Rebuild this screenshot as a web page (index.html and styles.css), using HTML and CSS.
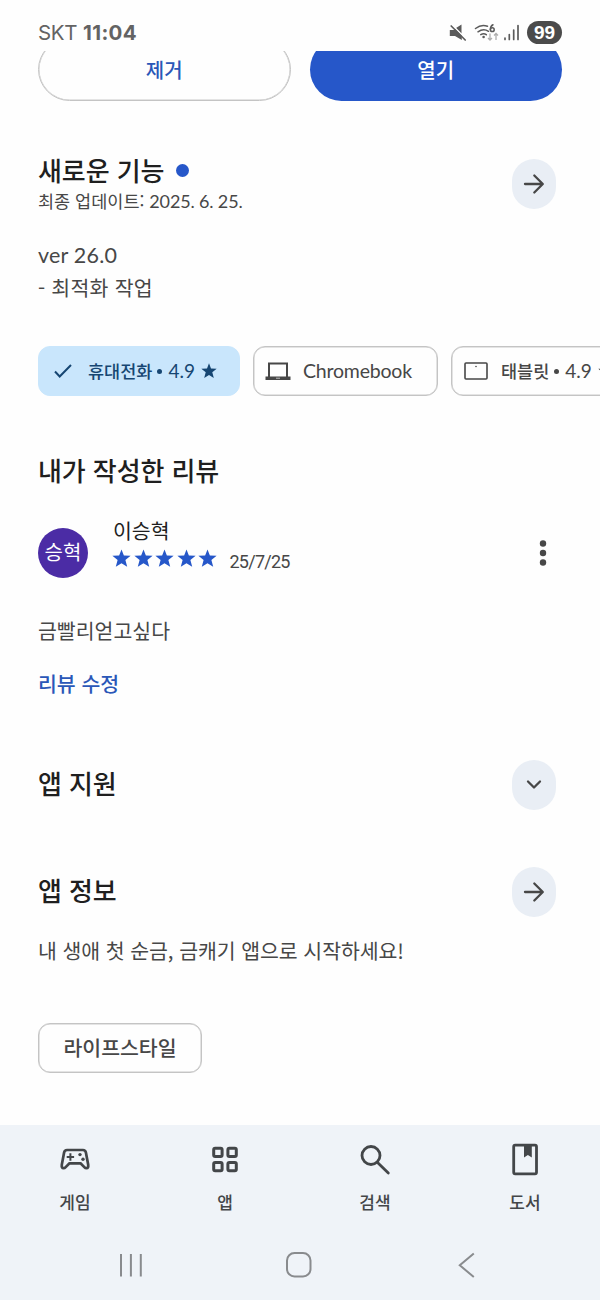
FILE: index.html
```html
<!DOCTYPE html>
<html lang="ko">
<head>
<meta charset="utf-8">
<title>앱 상세</title>
<link rel="stylesheet" href="styles.css">
</head>
<body>
<svg class="defs" width="0" height="0" aria-hidden="true">
  <symbol id="star" viewBox="0 0 20 20"><path d="M10 .4l2.500 6.400 7.100.4-5.500 4.500 1.900 7.100L10 14.900l-6 3.900 1.900-7.100L.4 7.200l7.100-.4z"/></symbol>
  <symbol id="arrow" viewBox="0 0 24 24"><path d="M3 12h17.500M12.300 3.500l8.500 8.500-8.500 8.500" fill="none" stroke="currentColor" stroke-width="2.300" stroke-linecap="round" stroke-linejoin="round"/></symbol>
</svg>
<div class="screen">
  <header class="status">
    <span class="carrier">SKT</span><span class="clock">11:04</span>
    <div class="status-icons">
      <svg class="mute" width="18" height="18" viewBox="0 0 18 18"><path d="M.8 6h4l1.500-1.100 6.500 6.500V16L6 12H.8zM7 4l5.500-3.500v9z" fill="#5b5b5b"/><path d="M3.500 1.200l13.500 14" stroke="#fefefe" stroke-width="1.200"/><path d="M2.200 2l14 14" stroke="#5b5b5b" stroke-width="1.700" stroke-linecap="round"/></svg>
      <svg class="wifi" width="26" height="20" viewBox="0 0 26 20"><g fill="none" stroke="#5b5b5b" stroke-width="1.500" stroke-linecap="round"><path d="M1.500 5.500Q7.500.8 13.500 3.300M4 8.800Q9.500 4.800 14.500 8.300M6.800 11.700Q9.700 9.800 12.300 11.700"/><path d="M19 1.800Q16.500 3 16.300 6.500"/><circle cx="18.300" cy="6.700" r="1.900"/></g><circle cx="9.600" cy="14" r="1.300" fill="#5b5b5b"/><path d="M16 10.500v6.500m-2-2l2 2 2-2M22 17v-6.500m-2 2l2-2 2 2" fill="none" stroke="#adadad" stroke-width="1.300"/></svg>
      <svg class="signal" width="17" height="18" viewBox="0 0 17 18"><path d="M2 14v1.500M6.300 10.500v5M10.700 6v9.500M15 1.500v14" stroke="#5b5b5b" stroke-width="1.700" stroke-linecap="round"/></svg>
      <span class="battery">99</span>
    </div>
  </header>

  <main>
    <div class="actions">
      <button class="btn outline">제거</button>
      <button class="btn filled">열기</button>
    </div>

    <section class="news">
      <div class="head">
        <div>
          <h2 class="with-dot">새로운 기능<i class="dot"></i></h2>
          <p class="updated">최종 업데이트: <span class="latin">2025. 6. 25.</span></p>
        </div>
        <button class="round"><svg width="24" height="24"><use href="#arrow"/></svg></button>
      </div>
      <p class="body notes"><span class="latin ver">ver 26.0</span><br><span class="change">- 최적화 작업</span></p>
    </section>

    <div class="chips">
      <div class="chip selected">
        <svg class="check" width="20" height="18" viewBox="0 0 20 18"><path d="M2 9.500l4.700 5L18 3" fill="none" stroke="currentColor" stroke-width="2"/></svg>
        <span class="label">휴대전화</span><i class="bullet"></i><span class="latin score">4.9</span><svg class="star" width="16" height="16"><use href="#star"/></svg>
      </div>
      <div class="chip chrome">
        <svg width="26" height="20" viewBox="0 0 26 20"><path d="M4 16V2.500h18V16" fill="none" stroke="#474747" stroke-width="2"/><path d="M.5 15.500h25V19H.5z" fill="#474747"/><path d="M11 17.200h4" stroke="#bbb"/></svg>
        <span class="latin chromebook">Chromebook</span>
      </div>
      <div class="chip tablet">
        <svg width="24" height="18" viewBox="0 0 24 18"><rect x="1" y="1" width="22" height="16" rx="1" fill="none" stroke="#474747" stroke-width="1.600"/><circle cx="12" cy="4.500" r=".8" fill="#474747"/></svg>
        <span class="label">태블릿</span><i class="bullet"></i><span class="latin score">4.9</span><svg class="star" width="16" height="16"><use href="#star"/></svg>
      </div>
    </div>

    <section class="review">
      <h2>내가 작성한 리뷰</h2>
      <div class="reviewer">
        <div class="avatar">승혁</div>
        <div class="who">
          <div class="name">이승혁</div>
          <div class="rating">
            <svg width="19" height="19"><use href="#star"/></svg><svg width="19" height="19"><use href="#star"/></svg><svg width="19" height="19"><use href="#star"/></svg><svg width="19" height="19"><use href="#star"/></svg><svg width="19" height="19"><use href="#star"/></svg>
            <span class="date">25/7/25</span>
          </div>
        </div>
        <svg class="more" width="8" height="28" viewBox="0 0 8 28" fill="#474747"><circle cx="4" cy="4.500" r="3.200"/><circle cx="4" cy="14" r="3.200"/><circle cx="4" cy="23.500" r="3.200"/></svg>
      </div>
      <p class="body comment">금빨리얻고싶다</p>
      <a class="edit">리뷰 수정</a>
    </section>

    <section class="head support">
      <h2>앱 지원</h2>
      <button class="round"><svg width="18" height="12" viewBox="0 0 18 12"><path d="M3 2.500l6 6 6-6" fill="none" stroke="currentColor" stroke-width="2.300" stroke-linecap="round" stroke-linejoin="round"/></svg></button>
    </section>

    <section class="about">
      <div class="head">
        <h2>앱 정보</h2>
        <button class="round"><svg width="24" height="24"><use href="#arrow"/></svg></button>
      </div>
      <p class="body intro">내 생애 첫 순금, 금캐기 앱으로 시작하세요!</p>
      <span class="tag">라이프스타일</span>
    </section>
  </main>

  <footer>
    <nav class="tabs">
      <a><svg width="34" height="34" viewBox="0 0 34 34" fill="none" stroke="#434649"><path d="M9 7h16q2.400 0 2.900 2.600l2.300 12.200q.4 3.400-1.700 3.400-1.200 0-2.200-1.100L22.500 20.300h-11l-3.800 3.800q-1 1.100-2.200 1.100-2.100 0-1.700-3.400L6.100 9.600Q6.600 7 9 7z" stroke-width="2.700" stroke-linejoin="round"/><path d="M8.700 14h7.400M12.400 10.300v7.400" stroke-width="2"/><circle cx="22" cy="11.600" r="1.700" fill="#434649" stroke="none"/><circle cx="25" cy="16.200" r="1.700" fill="#434649" stroke="none"/></svg>게임</a>
      <a><svg width="34" height="34" viewBox="0 0 34 34" fill="none" stroke="#434649" stroke-width="3"><rect x="5.700" y="5.200" width="8.400" height="8.400" rx="1.500"/><rect x="19.900" y="5.200" width="8.400" height="8.400" rx="1.500"/><rect x="5.700" y="19.400" width="8.400" height="8.400" rx="1.500"/><rect x="19.900" y="19.400" width="8.400" height="8.400" rx="1.500"/></svg>앱</a>
      <a><svg width="34" height="34" viewBox="0 0 34 34" fill="none" stroke="#434649" stroke-width="2.800" stroke-linecap="round"><circle cx="13" cy="12.500" r="9"/><path d="M19.500 19.500L30.300 30"/></svg>검색</a>
      <a><svg width="34" height="34" viewBox="0 0 34 34"><rect x="5.700" y="2.200" width="22.800" height="28.600" rx="1.500" fill="none" stroke="#434649" stroke-width="2.800"/><path d="M16 2h7.800v12.500L19.900 12 16 14.500z" fill="#434649"/></svg>도서</a>
    </nav>
    <div class="system">
      <svg width="28" height="28" viewBox="0 0 28 28"><path d="M5 3v22.500M14.900 3v22.500M24.800 3v22.500" stroke="#898b8e" stroke-width="2"/></svg>
      <svg width="28" height="28" viewBox="0 0 28 28"><rect x="2" y="2" width="23.500" height="23.500" rx="7.500" fill="none" stroke="#898b8e" stroke-width="2"/></svg>
      <svg width="28" height="28" viewBox="0 0 28 28"><path d="M20.800 2.500L6.800 14.300l14 11.700" fill="none" stroke="#898b8e" stroke-width="2"/></svg>
    </div>
  </footer>
</div>
</body>
</html>
```
FILE: styles.css
```css
* { box-sizing: border-box; }
body { margin: 0; background: #fefefe; font-family: "Noto Sans CJK KR", sans-serif; color: #474747; }
h2, p { margin: 0; }
button { border: 0; padding: 0; font: inherit; color: inherit; }
svg { flex: none; display: block; }
.defs { position: absolute; }
.latin { font-family: Lato, "Noto Sans CJK KR", sans-serif; }
.screen { width: 600px; height: 1300px; overflow: hidden; display: flex; flex-direction: column; }
.status { height: 51px; flex: none; display: flex; align-items: center; padding: 14px 38px 0; font-family: Inter, sans-serif; font-size: 20.500px; color: #636363; }
.carrier { width: 45px; letter-spacing: -.3px; }
.clock { font-weight: 700; letter-spacing: .35px; }
.status-icons { margin-left: auto; display: flex; align-items: center; }
.wifi { margin-left: 7px; }
.signal { margin: 0 7px 0 3px; }
.battery { width: 35px; height: 23px; border-radius: 12px; background: #4b4b4b; color: #fff; font-family: "Liberation Sans", sans-serif; font-size: 19px; font-weight: 700; line-height: 23px; text-align: center; }
main { flex: 1; min-height: 0; }
.actions { height: 50px; overflow: hidden; display: grid; grid-template: 100% / 1fr 1fr; align-items: end; gap: 19px; padding: 0 38px; }
.btn { height: 63px; border-radius: 32px; font-size: 20px; font-weight: 500; line-height: 60px; }
.outline { border: 1.500px solid #c4c4c4; background: transparent; color: #2a57b8; box-shadow: inset 0 0 0 .5px #c9c9c9; }
.filled { background: #2657c9; color: #fff; }
.head { display: flex; align-items: center; justify-content: space-between; padding: 0 44px 0 38px; }
h2 { font-size: 26px; font-weight: 500; line-height: 36px; letter-spacing: -.1px; color: #1f1f1f; }
.round { width: 44px; height: 50px; border-radius: 22px; background: #e9eef5; color: #474747; display: flex; align-items: center; justify-content: center; }
.news { height: 245px; padding-top: 51px; }
.news .round { margin-top: 2px; }
.with-dot { display: flex; align-items: center; gap: 12px; }
.dot { width: 13px; height: 13px; border-radius: 50%; background: #2657c9; }
.updated { font-size: 17.500px; line-height: 26px; white-space: nowrap; }
.updated .latin { font-size: 18px; letter-spacing: -.15px; }
.body { font-size: 20.500px; line-height: 32px; white-space: nowrap; }
.notes { padding: 24px 38px 0; }
.ver { font-size: 21.500px; letter-spacing: .2px; }
.change { letter-spacing: .25px; }
.chips { height: 50px; display: flex; gap: 13px; padding-left: 38px; overflow: hidden; }
.chip { flex: none; height: 50px; border: 1.500px solid #c4c4c4; box-shadow: inset 0 0 0 .5px #c9c9c9; border-radius: 12px; display: flex; align-items: center; }
.selected { width: 202px; border-color: #c9e6fc; background: #c9e6fc; box-shadow: none; color: #164672; padding-left: 14px; }
.label { font-size: 17.500px; font-weight: 500; line-height: 26px; margin-top: -1px; }
.selected .label { margin-left: 15px; }
.bullet { width: 5px; height: 5px; border-radius: 50%; background: currentColor; margin: 0 6px 0 5px; }
.score { font-size: 19px; line-height: 26px; margin-top: -1px; }
.star { fill: currentColor; margin-left: 6px; }
.chrome { width: 185px; padding-left: 11px; }
.chromebook { font-size: 19.500px; letter-spacing: -.2px; margin: -1px 0 0 12px; }
.tablet { width: 202px; padding-left: 12px; }
.tablet .label { margin-left: 13px; }
.review { height: 364px; padding: 56px 38px 0; }
.reviewer { display: flex; align-items: center; height: 60px; margin-top: 30px; }
.avatar { width: 50px; height: 50px; border-radius: 50%; background: #4b2ca5; color: #fff; font-size: 20px; line-height: 48px; text-align: center; align-self: flex-end; }
.who { margin-left: 24px; margin-top: -9px; }
.name { font-size: 20.500px; line-height: 30px; padding-left: 1px; color: #1f1f1f; }
.rating { display: flex; align-items: center; gap: 2.500px; height: 28px; fill: #2657c9; }
.date { margin-left: 10px; font-family: Roboto, sans-serif; font-size: 18px; letter-spacing: -.75px; padding-top: 6px; }
.more { margin-left: auto; margin-right: 15px; margin-top: 10px; }
.comment { margin-top: 36px; }
.edit { display: block; margin-top: 22px; font-size: 20.500px; line-height: 30px; font-weight: 500; color: #2a57b8; }
.support { height: 50px; }
.support h2, .about h2 { margin-top: -5px; }
.about { padding-top: 57px; }
.intro { padding: 17px 38px 0; letter-spacing: -.06px; }
.tag { display: block; width: 164px; height: 50px; margin: 57px 0 0 38px; border: 1.500px solid #c4c4c4; box-shadow: inset 0 0 0 .5px #c9c9c9; border-radius: 12px; font-size: 20.500px; font-weight: 500; line-height: 46px; text-align: center; }
footer { height: 175px; flex: none; background: #eff3f8; }
.tabs { height: 105px; display: grid; grid-template-columns: repeat(4, 1fr); padding-top: 18px; }
.tabs a { display: flex; flex-direction: column; align-items: center; font-size: 17px; font-weight: 500; line-height: 26px; gap: 12px; color: #434649; }
.system { display: flex; justify-content: space-between; padding: 21px 119px 0 116px; }
```
